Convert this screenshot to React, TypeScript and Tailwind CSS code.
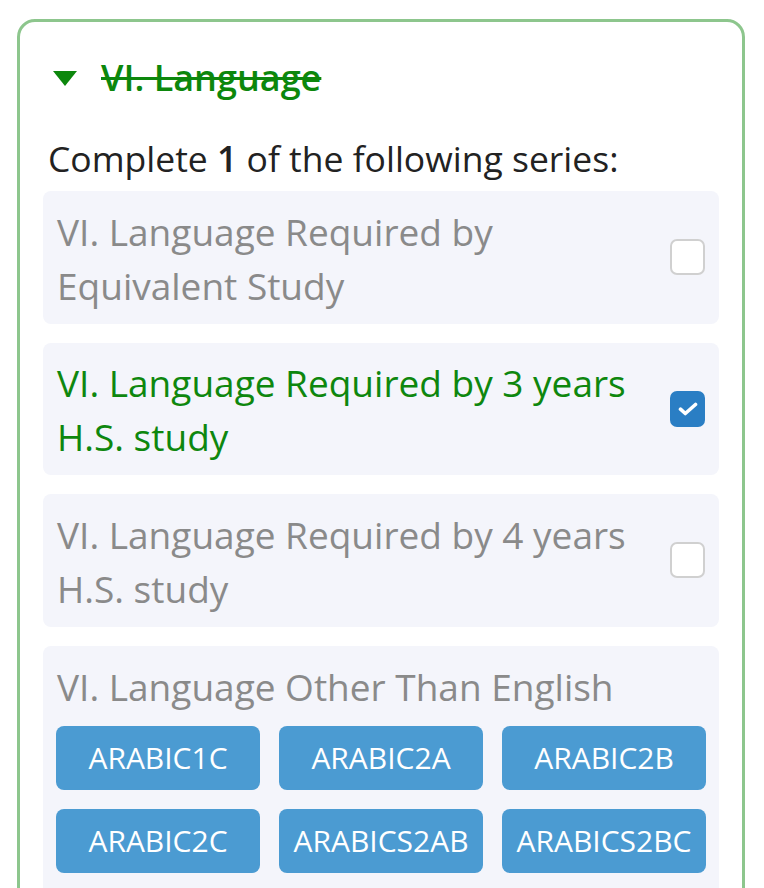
import React from 'react'

type Series = {
  title: string
  checked?: boolean
}

const series: Series[] = [
  { title: 'VI. Language Required by Equivalent Study' },
  { title: 'VI. Language Required by 3 years H.S. study', checked: true },
  { title: 'VI. Language Required by 4 years H.S. study' },
]

const courses = ['ARABIC1C', 'ARABIC2A', 'ARABIC2B', 'ARABIC2C', 'ARABICS2AB', 'ARABICS2BC']

const Checkbox = ({ checked }: { checked?: boolean }) =>
  checked ? (
    <div className="flex h-[36px] w-[35px] shrink-0 items-center justify-center rounded-[7px] bg-[#2a7ec4]">
      <svg viewBox="0 0 20 14" className="h-[14px] w-[20px]" fill="none">
        <path d="M2.5 7.2l4.8 4.3L17.5 2.5" stroke="white" strokeWidth="3.6" strokeLinecap="round" strokeLinejoin="round" />
      </svg>
    </div>
  ) : (
    <div className="h-[36px] w-[35px] shrink-0 rounded-[7px] border-2 border-[#d0d0d0] bg-white" />
  )

export default function App() {
  return (
    <div className="min-h-[888px] overflow-hidden bg-white font-['Open_Sans','Noto_Sans',sans-serif]">
      <div className="ml-[17px] mt-[19px] w-[728px] rounded-[18px] border-[3px] border-[#8dc68d] px-[23px] pt-[29px] pb-[24px]">
        <div className="flex items-center pl-[10px]">
          <svg viewBox="0 0 24 15" className="h-[15px] w-[24px]">
            <path d="M0 0h24L12 15z" fill="#0c870c" />
          </svg>
          <span className="ml-[24px] text-[36px] leading-[54px] font-semibold text-[#0c870c] line-through">VI. Language</span>
        </div>
        <p className="mt-[26px] pl-[5px] text-[35.5px] leading-[54px] text-[#222]">
          Complete <span className="font-semibold">1</span> of the following series:
        </p>
        <div className="mt-[6px] flex flex-col gap-[19px]">
          {series.map((s) => (
            <div key={s.title} className="flex h-[132.5px] items-center justify-between rounded-[8px] bg-[#f4f5fb] pl-[14px] pr-[14px]">
              <span className={`mt-[3px] max-w-[600px] text-[37px] leading-[54px] ${s.checked ? 'text-[#0e870e]' : 'text-[#8a8a8a]'}`}>{s.title}</span>
              <Checkbox checked={s.checked} />
            </div>
          ))}
          <div className="rounded-[8px] bg-[#f4f5fb] px-[13px] pt-[14px] pb-[24px]">
            <div className="pl-[1px] text-[37px] leading-[54px] text-[#8a8a8a]">VI. Language Other Than English</div>
            <div className="mt-[12px] grid grid-cols-3 gap-[19px]">
              {courses.map((c) => (
                <div key={c} className="flex h-[64px] items-center justify-center rounded-[8px] bg-[#4b9bd2] text-[30px] text-white">
                  {c}
                </div>
              ))}
            </div>
          </div>
        </div>
      </div>
    </div>
  )
}
